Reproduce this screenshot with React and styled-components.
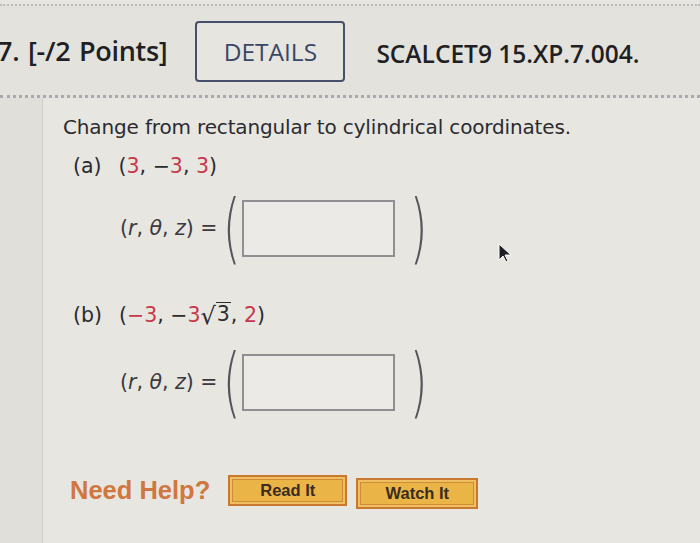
import styled, { createGlobalStyle } from 'styled-components';

const GlobalStyle = createGlobalStyle`
  html, body {
    margin: 0;
    padding: 0;
    background: #e7e6e1;
    overflow: hidden;
  }
  #root {
    width: 700px;
    height: 543px;
  }
`;

const Page = styled.div`
  position: relative;
  width: 700px;
  height: 543px;
  background: #e7e6e1;
  overflow: hidden;
  font-family: 'Open Sans', 'DejaVu Sans', sans-serif;
`;

const Header = styled.div`
  height: 94px;
  margin-top: 4px;
  border-top: 2px dotted #bdbdbd;
  border-bottom: 3px dotted #a9a9b0;
  background: #e3e2dd;
  display: flex;
  align-items: center;
  box-sizing: border-box;
`;

const Points = styled.div`
  margin-left: -3px;
  font-size: 27px;
  font-weight: 600;
  color: #1f1f24;
  letter-spacing: -0.3px;
  word-spacing: 2px;
`;

const DetailsButton = styled.button`
  margin-left: 28px;
  margin-top: 2px;
  width: 150px;
  height: 61px;
  border: 2.5px solid #47506a;
  border-radius: 4px;
  background: #e6e5e0;
  color: #3a4766;
  font-family: 'Open Sans', sans-serif;
  font-size: 24.5px;
  font-weight: 500;
  cursor: pointer;
`;

const Code = styled.div`
  margin-left: 31px;
  margin-top: 6px;
  font-size: 24.5px;
  font-weight: 600;
  color: #1f1f24;
`;

const Body = styled.div`
  display: flex;
  height: 450px;
`;

const Gutter = styled.div`
  width: 42px;
  border-right: 1px solid #cfcec9;
  background: #e0dfda;
`;

const Content = styled.div`
  flex: 1;
  padding: 15px 0 0 20px;
  font-family: 'DejaVu Sans', Verdana, sans-serif;
  color: #2b2b30;
`;

const Prompt = styled.div`
  font-size: 20px;
  line-height: 28px;
  letter-spacing: -0.15px;
`;

const Part = styled.div`
  margin-top: ${(p) => p.$top}px;
  padding-left: 10px;
`;

const PartLabel = styled.div`
  display: flex;
  gap: 17px;
  font-size: 20.5px;
  line-height: 28px;
  align-items: baseline;
`;

const Red = styled.span`
  color: #c7384a;
`;

const Root = styled.span`
  display: inline-flex;
  align-items: flex-end;
`;

const Radical = styled.span`
  font-size: 24px;
  line-height: 1;
  transform: translateY(2px);
`;

const Radicand = styled.span`
  border-top: 1.5px solid #2b2b30;
  padding: 0 1px;
  line-height: 1.1;
`;

const AnswerRow = styled.div`
  display: flex;
  align-items: center;
  height: 70px;
  margin-top: ${(p) => p.$top}px;
  padding-left: 47px;
`;

const Vars = styled.span`
  font-size: 20.5px;
  font-family: 'DejaVu Sans', sans-serif;
  color: #3a3a40;
  margin-right: 2px;
  i {
    font-style: italic;
  }
`;

const BigParen = styled.span`
  display: inline-block;
  width: 14px;
  text-align: center;
  font-family: 'DejaVu Sans', sans-serif;
  font-weight: 200;
  font-size: 76px;
  line-height: 70px;
  color: #55555c;
  transform: scaleX(0.6);
  margin: ${(p) => p.$margin};
`;

const AnswerBox = styled.input`
  width: 153px;
  height: 57px;
  box-sizing: border-box;
  border: 2px solid #8f8f92;
  background: #eceae6;
  outline: none;
`;

const HelpRow = styled.div`
  display: flex;
  align-items: center;
  margin-top: 55px;
  padding-left: 7px;
`;

const NeedHelp = styled.span`
  font-family: 'Liberation Sans', Arial, sans-serif;
  font-weight: 700;
  font-size: 25.5px;
  color: #d0773f;
  margin-right: 18px;
`;

const HelpButton = styled.button`
  width: ${(p) => p.$width}px;
  height: 31px;
  margin-right: 9px;
  margin-top: ${(p) => p.$shift}px;
  background: #ebb447;
  border: 2px solid #c9792f;
  box-shadow: inset 0 0 0 2px #f0c060, inset 0 0 0 3px #cf8a3a;
  font-family: 'Liberation Sans', Arial, sans-serif;
  font-weight: 700;
  font-size: 16.5px;
  color: #3a2d20;
  cursor: pointer;
`;

const Cursor = styled.svg`
  position: absolute;
  left: 497px;
  top: 242px;
`;

const Answer = ({ top }) => (
  <AnswerRow $top={top}>
    <Vars>
      (<i>r</i>, <i>θ</i>, <i>z</i>) =
    </Vars>
    <BigParen $margin="0 8px 0 0">(</BigParen>
    <AnswerBox type="text" aria-label="answer" />
    <BigParen $margin="0 0 0 12px">)</BigParen>
  </AnswerRow>
);

export default function App() {
  return (
    <Page>
      <GlobalStyle />
      <Header>
        <Points>7. [-/2 Points]</Points>
        <DetailsButton>DETAILS</DetailsButton>
        <Code>SCALCET9 15.XP.7.004.</Code>
      </Header>
      <Body>
        <Gutter />
        <Content>
          <Prompt>Change from rectangular to cylindrical coordinates.</Prompt>
          <Part $top={11}>
            <PartLabel>
              <span>(a)</span>
              <span>
                (<Red>3</Red>, −<Red>3</Red>, <Red>3</Red>)
              </span>
            </PartLabel>
            <Answer top={13} />
          </Part>
          <Part $top={38}>
            <PartLabel>
              <span>(b)</span>
              <span>
                (<Red>−3</Red>, −<Red>3</Red>
                <Root>
                  <Radical>√</Radical>
                  <Radicand>3</Radicand>
                </Root>
                , <Red>2</Red>)
              </span>
            </PartLabel>
            <Answer top={18} />
          </Part>
          <HelpRow>
            <NeedHelp>Need Help?</NeedHelp>
            <HelpButton $width={119} $shift={0}>Read It</HelpButton>
            <HelpButton $width={122} $shift={6}>Watch It</HelpButton>
          </HelpRow>
        </Content>
      </Body>
      <Cursor width="16" height="22" viewBox="0 0 16 22">
        <path d="M2 2 L2 18 L6 14 L9 20 L11 19 L8 13 L14 13 Z" fill="#1e1e24" stroke="#ffffff" strokeWidth="1" />
      </Cursor>
    </Page>
  );
}
